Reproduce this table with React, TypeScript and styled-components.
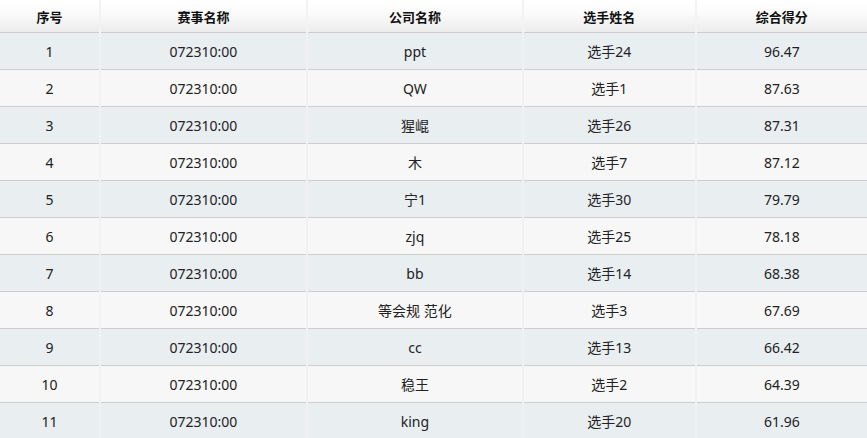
import React from 'react'
import styled, { createGlobalStyle } from 'styled-components'

const GlobalStyle = createGlobalStyle`
  html, body {
    margin: 0;
    padding: 0;
    background: #ffffff;
  }
  body {
    font-family: 'Noto Sans', 'Noto Sans CJK SC', sans-serif;
    color: #222;
  }
`

const Table = styled.table`
  width: 867px;
  border-collapse: collapse;
  table-layout: fixed;
`

const HeadCell = styled.th<{ w: number }>`
  width: ${({ w }) => w}px;
  height: 32px;
  padding: 0;
  font-size: 13px;
  font-weight: bold;
  text-align: center;
  color: #111;
  background: linear-gradient(to bottom, #ffffff 0%, #fbfbfb 40%, #ececec 100%);
  border-left: 2px solid #f3f3f3;
  border-bottom: 1px solid #cdcdcd;
  &:first-child {
    border-left: none;
  }
`

const Row = styled.tr<{ odd: boolean }>`
  background: ${({ odd }) => (odd ? '#e9eef1' : '#f7f7f7')};
`

const Cell = styled.td`
  height: 36px;
  padding: 0;
  font-size: 14px;
  text-align: center;
  border-left: 2px solid #f1f1f1;
  border-bottom: 1px solid #cdcdcd;
  &:first-child {
    border-left: none;
  }
`

const columns = [
  { title: '序号', w: 99 },
  { title: '赛事名称', w: 204 },
  { title: '公司名称', w: 214 },
  { title: '选手姓名', w: 170 },
  { title: '综合得分', w: 170 },
]

const rows = [
  ['ppt', '选手24', '96.47'],
  ['QW', '选手1', '87.63'],
  ['猩崐', '选手26', '87.31'],
  ['木', '选手7', '87.12'],
  ['宁1', '选手30', '79.79'],
  ['zjq', '选手25', '78.18'],
  ['bb', '选手14', '68.38'],
  ['等会规 范化', '选手3', '67.69'],
  ['cc', '选手13', '66.42'],
  ['稳王', '选手2', '64.39'],
  ['king', '选手20', '61.96'],
]

export default function App() {
  return (
    <>
      <GlobalStyle />
      <Table>
        <thead>
          <tr>
            {columns.map(c => (
              <HeadCell key={c.title} w={c.w}>
                {c.title}
              </HeadCell>
            ))}
          </tr>
        </thead>
        <tbody>
          {rows.map(([company, player, score], i) => (
            <Row key={i} odd={i % 2 === 0}>
              <Cell>{i + 1}</Cell>
              <Cell>072310:00</Cell>
              <Cell>{company}</Cell>
              <Cell>{player}</Cell>
              <Cell>{score}</Cell>
            </Row>
          ))}
        </tbody>
      </Table>
    </>
  )
}
